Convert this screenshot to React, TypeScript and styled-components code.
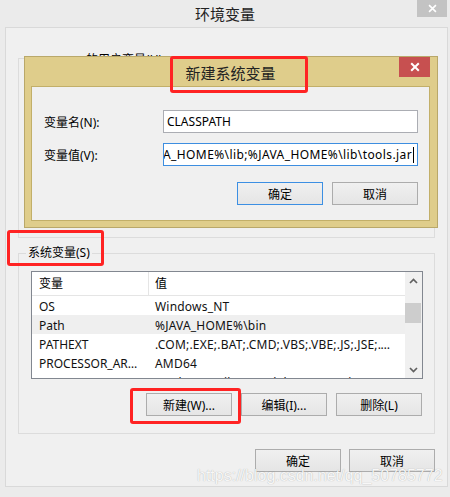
import React from 'react';
import styled, { createGlobalStyle } from 'styled-components';

const GlobalStyle = createGlobalStyle`
  html, body { margin: 0; padding: 0; background: #ebebeb; }
  * { box-sizing: border-box; }
`;

const FONT = `"Noto Sans", "Noto Sans CJK SC", sans-serif`;

const Screen = styled.div`
  position: relative;
  width: 450px;
  height: 497px;
  overflow: hidden;
  background: #ebebeb;
  font-family: ${FONT};
  font-size: 12px;
  color: #000;
`;

const TitleBar = styled.div<{ $h: number }>`
  height: ${(p) => p.$h}px;
  display: grid;
  grid-template-columns: 1fr auto 1fr;
  align-items: start;
`;

const TitleText = styled.div<{ $h: number; $pt?: number }>`
  grid-column: 2;
  font-family: "Noto Sans CJK SC", sans-serif;
  font-size: 15px;
  line-height: ${(p) => p.$h}px;
  padding-top: ${(p) => p.$pt ?? 0}px;
  color: #222;
  white-space: nowrap;
`;

const CloseBtn = styled.div<{ $red?: boolean; $w: number; $h: number; $mr: number }>`
  grid-column: 3;
  justify-self: end;
  width: ${(p) => p.$w}px;
  height: ${(p) => p.$h}px;
  margin-right: ${(p) => p.$mr}px;
  background: ${(p) => (p.$red ? '#c75050' : '#c3c3c3')};
  display: flex;
  align-items: center;
  justify-content: center;
`;

const Client = styled.div`
  margin-left: 5px;
  width: 443px;
  height: 460px;
  border: 1px solid #d9d9d9;
  background: #f0f0f0;
  padding: 30px 12px 14px;
  display: flex;
  flex-direction: column;
`;

const GroupBox = styled.div<{ $h: number; $mt?: number }>`
  height: ${(p) => p.$h}px;
  margin-top: ${(p) => p.$mt ?? 0}px;
  border: 1px solid #dcdcdc;
  padding: 0 11px 0 12px;
  display: flex;
  flex-direction: column;
`;

const Legend = styled.span<{ $mt: number }>`
  align-self: flex-start;
  height: 16px;
  margin: ${(p) => p.$mt}px 0 0 -5px;
  padding: 0 2px;
  background: #f0f0f0;
  line-height: 16px;
  white-space: nowrap;
`;

const ListBox = styled.div<{ $mt: number }>`
  margin-top: ${(p) => p.$mt}px;
  height: 108px;
  border: 1px solid #828790;
  background: #fff;
  display: flex;
  overflow: hidden;
`;

const Table = styled.div`
  flex: 1;
  min-width: 0;
  display: flex;
  flex-direction: column;
  overflow: hidden;
`;

const HeaderRow = styled.div`
  flex: none;
  height: 24px;
  display: grid;
  grid-template-columns: 117px 1fr;
  border-bottom: 1px solid #e5e5e5;
`;

const HeaderCell = styled.div<{ $first?: boolean }>`
  line-height: 23px;
  padding-left: ${(p) => (p.$first ? 7 : 6)}px;
  border-right: ${(p) => (p.$first ? '1px solid #e5e5e5' : 'none')};
`;

const Row = styled.div<{ $selected?: boolean }>`
  flex: none;
  height: 19px;
  display: grid;
  grid-template-columns: 117px 1fr;
  background: ${(p) => (p.$selected ? '#efefef' : 'transparent')};
`;

const Cell = styled.div<{ $first?: boolean }>`
  height: 19px;
  line-height: 19px;
  padding-top: 1px;
  padding-left: ${(p) => (p.$first ? 7 : 6)}px;
  padding-right: 7px;
  letter-spacing: ${(p) => (p.$first ? 0 : 0.2)}px;
  white-space: nowrap;
  overflow: hidden;
  text-overflow: ellipsis;
  color: #111;
`;

const ScrollBar = styled.div`
  flex: none;
  width: 17px;
  background: #f0f0f0;
  display: flex;
  flex-direction: column;
`;

const ArrowBox = styled.div`
  flex: none;
  height: 17px;
  display: flex;
  align-items: center;
  justify-content: center;
`;

const Track = styled.div`
  flex: 1;
`;

const Thumb = styled.div`
  margin: 14px 1px 0 0;
  height: 20px;
  background: #cdcdcd;
`;

const ButtonRow = styled.div<{ $mt: number; $gap: number; $pr?: number }>`
  margin-top: ${(p) => p.$mt}px;
  padding-right: ${(p) => p.$pr ?? 0}px;
  display: flex;
  justify-content: flex-end;
  gap: ${(p) => p.$gap}px;
`;

const Button = styled.div<{ $default?: boolean }>`
  width: 86px;
  height: 23px;
  border: 1px solid ${(p) => (p.$default ? '#3c8fe3' : '#acacac')};
  background: linear-gradient(#f0f0f0, #e5e5e5);
  display: flex;
  align-items: center;
  justify-content: center;
  font-size: 12px;
  color: #000;
  white-space: nowrap;
`;

const Dialog = styled.div`
  position: absolute;
  left: 24px;
  top: 56px;
  width: 414px;
  height: 172px;
  border: 1px solid #b9a86a;
  background: #dfcd8b;
  padding: 0 7px 6px 6px;
  display: flex;
  flex-direction: column;
`;

const DialogClient = styled.div`
  flex: 1;
  border: 1px solid #c2af69;
  background: #f0f0f0;
  padding: 23px 11px 0 12px;
  display: flex;
  flex-direction: column;
`;

const FormRow = styled.div<{ $mt?: number }>`
  margin-top: ${(p) => p.$mt ?? 0}px;
  display: grid;
  grid-template-columns: 119px 255px;
  align-items: center;
`;

const FieldLabel = styled.div`
  white-space: nowrap;
`;

const TextField = styled.div<{ $focused?: boolean }>`
  height: 23px;
  border: 1px solid ${(p) => (p.$focused ? '#3d8ee0' : '#abadb3')};
  background: #fff;
  padding: 0 3px;
  display: flex;
  align-items: center;
  justify-content: ${(p) => (p.$focused ? 'flex-end' : 'flex-start')};
  overflow: hidden;
`;

const FieldText = styled.span<{ $spacing?: number }>`
  flex: none;
  white-space: nowrap;
  letter-spacing: ${(p) => p.$spacing ?? 0}px;
  color: #000;
`;

const Caret = styled.span`
  flex: none;
  width: 1px;
  height: 16px;
  margin-left: 1px;
  background: #000;
`;

const RedBox = styled.div<{ $x: number; $y: number; $w: number; $h: number }>`
  position: absolute;
  left: ${(p) => p.$x}px;
  top: ${(p) => p.$y}px;
  width: ${(p) => p.$w}px;
  height: ${(p) => p.$h}px;
  border: 3px solid #ff2323;
  border-radius: 3px;
  pointer-events: none;
`;

const Watermark = styled.div`
  position: absolute;
  left: 197px;
  top: 467px;
  font-family: "Liberation Sans", Arial, sans-serif;
  font-size: 16px;
  line-height: 18px;
  color: #f7f7f7;
  text-shadow: 0 0 1px rgba(0, 0, 0, 0.3);
  white-space: nowrap;
  pointer-events: none;
`;

const XIcon = ({ size, stroke }: { size: number; stroke: number }) => (
  <svg width={size} height={size} viewBox="0 0 10 10">
    <path d="M1.2 1.2 L8.8 8.8 M8.8 1.2 L1.2 8.8" stroke="#fff" strokeWidth={stroke} fill="none" />
  </svg>
);

const Chevron = ({ up }: { up?: boolean }) => (
  <svg width="9" height="6" viewBox="0 0 9 6">
    <path
      d={up ? 'M1 5 L4.5 1.5 L8 5' : 'M1 1 L4.5 4.5 L8 1'}
      stroke="#606060"
      strokeWidth="1.7"
      fill="none"
    />
  </svg>
);

type Var = { name: string; value: string };

const systemVars: Var[] = [
  { name: 'OS', value: 'Windows_NT' },
  { name: 'Path', value: '%JAVA_HOME%\\bin' },
  { name: 'PATHEXT', value: '.COM;.EXE;.BAT;.CMD;.VBS;.VBE;.JS;.JSE;.WSF;.WSH;.MSC' },
  { name: 'PROCESSOR_ARCHITECTURE', value: 'AMD64' },
  { name: 'PROCESSOR_IDENTIFIER', value: 'Intel64 Family 6 Model 142 Stepping 10, GenuineIntel' },
];

const userVars: Var[] = [
  { name: 'OneDrive', value: 'C:\\Users\\wuxueyun\\OneDrive' },
  { name: 'Path', value: 'C:\\Users\\wuxueyun\\AppData\\Local\\Microsoft\\WindowsApps;' },
  { name: 'TEMP', value: '%USERPROFILE%\\AppData\\Local\\Temp' },
  { name: 'TMP', value: '%USERPROFILE%\\AppData\\Local\\Temp' },
];

const VarList = ({ vars, selected }: { vars: Var[]; selected: number }) => (
  <ListBox $mt={10}>
    <Table>
      <HeaderRow>
        <HeaderCell $first>变量</HeaderCell>
        <HeaderCell>值</HeaderCell>
      </HeaderRow>
      {vars.map((v, i) => (
        <Row key={v.name} $selected={i === selected}>
          <Cell $first>{v.name}</Cell>
          <Cell>{v.value}</Cell>
        </Row>
      ))}
    </Table>
    <ScrollBar>
      <ArrowBox>
        <Chevron up />
      </ArrowBox>
      <Track>
        <Thumb />
      </Track>
      <ArrowBox>
        <Chevron />
      </ArrowBox>
    </ScrollBar>
  </ListBox>
);

const GroupButtons = () => (
  <ButtonRow $mt={14} $gap={9} $pr={1}>
    <Button>新建(W)...</Button>
    <Button>编辑(I)...</Button>
    <Button>删除(L)</Button>
  </ButtonRow>
);

export default function App() {
  return (
    <Screen>
      <GlobalStyle />
      <TitleBar $h={27}>
        <TitleText $h={27}>环境变量</TitleText>
        <CloseBtn $w={30} $h={17} $mr={3}>
          <XIcon size={9} stroke={1.8} />
        </CloseBtn>
      </TitleBar>
      <Client>
        <GroupBox $h={180}>
          <Legend $mt={-7}>wuxueyun的用户变量(U)</Legend>
          <VarList vars={userVars} selected={1} />
          <GroupButtons />
        </GroupBox>
        <GroupBox $h={181} $mt={15}>
          <Legend $mt={-9}>系统变量(S)</Legend>
          <VarList vars={systemVars} selected={1} />
          <GroupButtons />
        </GroupBox>
        <ButtonRow $mt={15} $gap={8}>
          <Button>确定</Button>
          <Button>取消</Button>
        </ButtonRow>
      </Client>

      <Dialog>
        <TitleBar $h={29}>
          <TitleText $h={29} $pt={1}>新建系统变量</TitleText>
          <CloseBtn $red $w={31} $h={20} $mr={0}>
            <XIcon size={10} stroke={2} />
          </CloseBtn>
        </TitleBar>
        <DialogClient>
          <FormRow>
            <FieldLabel>变量名(N):</FieldLabel>
            <TextField>
              <FieldText>CLASSPATH</FieldText>
            </TextField>
          </FormRow>
          <FormRow $mt={10}>
            <FieldLabel>变量值(V):</FieldLabel>
            <TextField $focused>
              <FieldText $spacing={0.4}>.;%JAVA_HOME%\lib;%JAVA_HOME%\lib\tools.jar</FieldText>
              <Caret />
            </TextField>
          </FormRow>
          <ButtonRow $mt={16} $gap={9}>
            <Button $default>确定</Button>
            <Button>取消</Button>
          </ButtonRow>
        </DialogClient>
      </Dialog>

      <RedBox $x={170} $y={56} $w={138} $h={37} />
      <RedBox $x={7} $y={230} $w={97} $h={36} />
      <RedBox $x={130} $y={388} $w={111} $h={36} />
      <Watermark>https://blog.csdn.net/qq_50785772</Watermark>
    </Screen>
  );
}
